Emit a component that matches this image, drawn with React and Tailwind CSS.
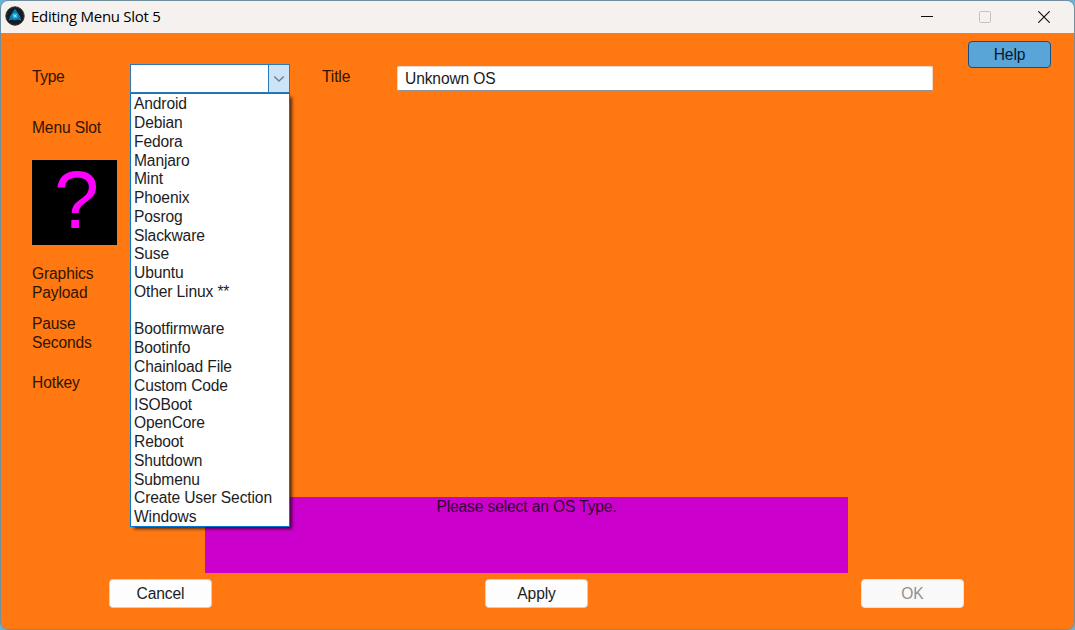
const OS_TYPES = [
  'Android', 'Debian', 'Fedora', 'Manjaro', 'Mint', 'Phoenix', 'Posrog', 'Slackware',
  'Suse', 'Ubuntu', 'Other Linux **', '', 'Bootfirmware', 'Bootinfo', 'Chainload File',
  'Custom Code', 'ISOBoot', 'OpenCore', 'Reboot', 'Shutdown', 'Submenu',
  'Create User Section', 'Windows',
];

function AppIcon() {
  return (
    <svg width="20" height="20" viewBox="0 0 20 20">
      <circle cx="10" cy="10" r="9.2" fill="#1b1e21" stroke="#303336" strokeWidth="1" />
      <circle cx="10" cy="10" r="7" fill="#111c24" />
      <path d="M10 4 L14.8 11.5 C13 14 7 14 5.2 11.5 Z" fill="#087bb5" stroke="#087bb5" strokeWidth="1.5" strokeLinejoin="round" />
      <path d="M4 13.8 L6.3 12.6 M16 13.8 L13.7 12.6" stroke="#1688bd" strokeWidth="1.5" />
      <circle cx="10" cy="9.8" r="2.7" fill="#20abd8" />
      <path d="M8.3 8.7 L11.6 11 M11.4 8.4 L9 11.2" stroke="#9beef7" strokeWidth="0.9" />
    </svg>
  );
}

function TitleBar() {
  return (
    <header className="flex h-8 shrink-0 items-center bg-[#f5f1ef] pb-0.5 pl-1">
      <AppIcon />
      <h1 className="ml-1.5 whitespace-nowrap font-['Open_Sans',sans-serif] text-[15px] leading-5 tracking-[-0.27px] text-black">
        Editing Menu Slot 5
      </h1>
      <div className="ml-auto flex items-center pr-6 pt-0.5">
        <svg width="12" height="12" viewBox="0 0 12 12" className="mr-[46px]">
          <path d="M0 5.5H12" stroke="#111" />
        </svg>
        <svg width="12" height="12" viewBox="0 0 12 12" className="mr-[47px]">
          <rect x="0.5" y="0.5" width="11" height="11" rx="1" fill="none" stroke="#c5c1bf" />
        </svg>
        <svg width="12" height="12" viewBox="0 0 12 12">
          <path d="M0.3 0.3L11.7 11.7M11.7 0.3L0.3 11.7" stroke="#111" strokeWidth="1.2" />
        </svg>
      </div>
    </header>
  );
}

function TypeSelect() {
  return (
    <div className="relative mt-[31px] h-[29px] w-40 shrink-0">
      <button className="flex h-full w-full border border-[#2c79b9] bg-white" aria-label="Type">
        <span className="flex-1" />
        <span className="flex h-full w-[21px] items-center justify-center border-l border-[#2c79b9] bg-[#cce4f7]">
          <svg width="12" height="8" viewBox="0 0 12 8">
            <path d="M1.2 1.5L6 6L10.8 1.5" fill="none" stroke="#747d85" strokeWidth="1.4" />
          </svg>
        </span>
      </button>
      <ul className="absolute left-0 top-[28.5px] z-10 h-[434px] w-40 border border-[#0078d7] bg-white pl-[3px] pt-[1.8px] text-[#1d1d25] shadow-[3px_3px_3px_-1px_rgba(0,0,0,0.65)]">
        {OS_TYPES.map((name, i) => (
          <li key={i} className="h-[18.77px] whitespace-nowrap leading-[18.77px]">{name}</li>
        ))}
      </ul>
    </div>
  );
}

function FormLabels() {
  return (
    <div className="flex w-[98px] shrink-0 flex-col pt-[35px]">
      <span className="tracking-[-0.4px]">Type</span>
      <span className="mt-8">Menu Slot</span>
      <div className="mt-[22.5px] flex h-[85px] w-[85px] items-center justify-center bg-black pl-1">
        <span className="-mt-1 text-[81px] leading-none tracking-normal text-[#ff00ff]">?</span>
      </div>
      <span className="mt-5">Graphics</span>
      <span>Payload</span>
      <span className="mt-[12.5px]">Pause</span>
      <span>Seconds</span>
      <span className="mt-[21px]">Hotkey</span>
    </div>
  );
}

const buttonClass = 'h-[29px] w-[103px] rounded-[4px] border border-[#d6cfca] bg-[#fdfdfd] pt-px text-[#1b1b1b]';

export default function App() {
  return (
    <div className="h-[630px] w-[1075px] overflow-hidden bg-[#69b3d8]">
      <main className="flex h-full w-full flex-col overflow-hidden rounded-lg border border-[#718f9d] font-['Liberation_Sans',Arial,sans-serif] text-[15.6px] leading-[18.77px] tracking-[-0.13px] text-[#301500]">
        <TitleBar />
        <div className="flex flex-1 flex-col bg-[#ff7812]">
          <section className="flex h-[464px] shrink-0 items-start pl-[31px]">
            <FormLabels />
            <TypeSelect />
            <span className="ml-8 mt-[35px] w-[75px] shrink-0">Title</span>
            <input
              aria-label="Title"
              className="mt-[33px] h-[25px] w-[536px] shrink-0 rounded-[2px] border border-[#e9d9cd] border-b-[#969392] bg-white px-[7px] text-[#1b1b1b] outline-none"
              defaultValue="Unknown OS"
            />
            <button className="ml-[35px] mt-2 h-[27px] w-[83px] shrink-0 rounded-[4px] border border-[#174f83] bg-[#59a5d8] pt-px text-[#07172b]">
              Help
            </button>
          </section>
          <p className="ml-[204px] h-[76px] w-[643px] shrink-0 bg-[#cc00cc] pt-px text-center text-[#300030]">
            Please select an OS Type.
          </p>
          <footer className="ml-[108px] mt-1.5 flex w-[855px] justify-between">
            <button className={buttonClass}>Cancel</button>
            <button className={buttonClass}>Apply</button>
            <button disabled className="h-[29px] w-[103px] rounded-[4px] border border-[#f3dfd1] bg-[#f9f9f9] pt-px text-[#909090]">OK</button>
          </footer>
        </div>
      </main>
    </div>
  );
}
